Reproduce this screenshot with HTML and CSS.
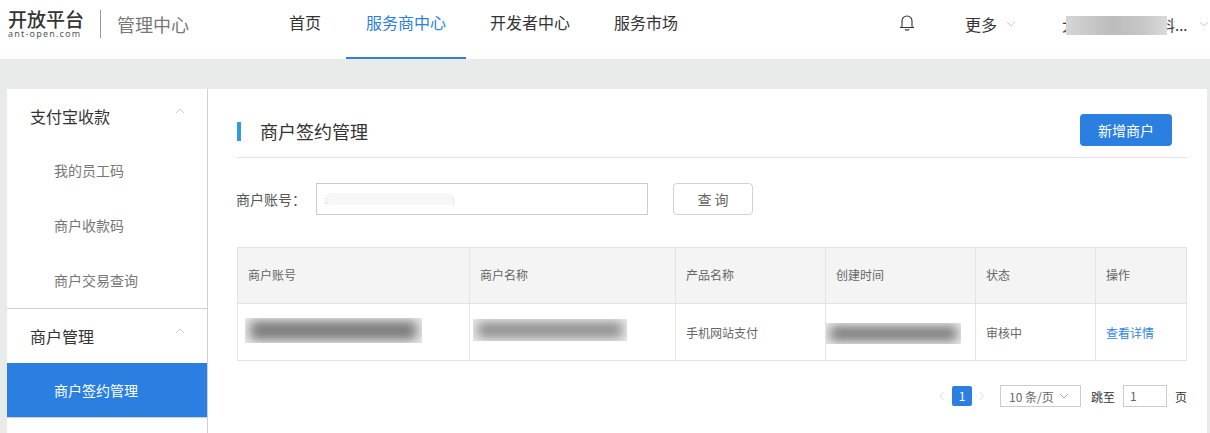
FILE: index.html
```html
<!DOCTYPE html>
<html lang="zh">
<head>
<meta charset="utf-8">
<title>商户签约管理</title>
<link rel="stylesheet" href="styles.css">
</head>
<body>
<header class="topbar">
  <div class="brand">
    <div class="logo">
      <div class="logo-cn">开放平台</div>
      <div class="logo-en">ant-open.com</div>
    </div>
    <div class="brand-sep"></div>
    <div class="brand-sub">管理中心</div>
  </div>
  <nav class="nav">
    <a class="nav-item">首页</a>
    <a class="nav-item active">服务商中心</a>
    <a class="nav-item">开发者中心</a>
    <a class="nav-item">服务市场</a>
  </nav>
  <div class="top-right">
    <svg class="bell" width="16" height="18" viewBox="0 0 16 18" fill="none" stroke="#333" stroke-width="1.1">
      <path d="M3 12.500V7a5 5 0 0 1 10 0v5.500"/>
      <path d="M1 13.500c1.200-.2 2-.5 2-1M15 13.500c-1.200-.2-2-.5-2-1M1 13.500h14"/>
      <path d="M6 15.200c.6 1.200 3.400 1.200 4 0"/>
    </svg>
    <div class="more">更多<svg class="chev" width="10" height="6" viewBox="0 0 10 6"><path d="M1 1l4 4 4-4" fill="none" stroke="#ccc" stroke-width="1"/></svg></div>
    <div class="user">
      <span class="user-name">大</span>
      <span class="user-blur"></span>
      <span class="user-name">料...</span>
      <svg class="chev" width="10" height="6" viewBox="0 0 10 6"><path d="M1 1l4 4 4-4" fill="none" stroke="#ccc" stroke-width="1"/></svg>
    </div>
  </div>
</header>
<div class="layout">
  <aside class="sidebar">
    <section class="group">
      <div class="group-title">支付宝收款<svg class="chev-up" width="10" height="6" viewBox="0 0 10 6"><path d="M1 5l4-4 4 4" fill="none" stroke="#ccc" stroke-width="1"/></svg></div>
      <a class="side-item">我的员工码</a>
      <a class="side-item">商户收款码</a>
      <a class="side-item">商户交易查询</a>
    </section>
    <section class="group second">
      <div class="group-title">商户管理<svg class="chev-up" width="10" height="6" viewBox="0 0 10 6"><path d="M1 5l4-4 4 4" fill="none" stroke="#ccc" stroke-width="1"/></svg></div>
      <a class="side-item current">商户签约管理</a>
    </section>
  </aside>
  <main class="content">
    <div class="page-head">
      <h1 class="page-title">商户签约管理</h1>
      <button class="btn-primary">新增商户</button>
    </div>
    <div class="search">
      <label class="search-label">商户账号：</label>
      <div class="search-input"><span class="faint">z</span><span class="input-blur"></span><span class="faint">)</span></div>
      <button class="btn-query">查 询</button>
    </div>
    <table class="table">
      <colgroup>
        <col class="c1"><col class="c2"><col class="c3"><col class="c3"><col class="c5"><col class="c6">
      </colgroup>
      <thead>
        <tr><th>商户账号</th><th>商户名称</th><th>产品名称</th><th>创建时间</th><th>状态</th><th>操作</th></tr>
      </thead>
      <tbody>
        <tr>
          <td class="masked"><span class="smear s1"><i></i></span></td>
          <td class="masked"><span class="smear s2"><i></i></span></td>
          <td>手机网站支付</td>
          <td class="masked"><span class="smear s3"><i></i></span></td>
          <td>审核中</td>
          <td><a class="link">查看详情</a></td>
        </tr>
      </tbody>
    </table>
    <div class="pager">
      <svg class="pg-arrow" width="7" height="10" viewBox="0 0 7 10"><path d="M5.500 1l-4 4 4 4" fill="none" stroke="#ddd" stroke-width="1"/></svg>
      <span class="pg-current">1</span>
      <svg class="pg-arrow" width="7" height="10" viewBox="0 0 7 10"><path d="M1.500 1l4 4-4 4" fill="none" stroke="#ddd" stroke-width="1"/></svg>
      <div class="pg-size">10 条/页<svg width="10" height="6" viewBox="0 0 10 6"><path d="M1 1l4 4 4-4" fill="none" stroke="#aaa" stroke-width="1"/></svg></div>
      <span class="pg-text jump">跳至</span>
      <div class="pg-input">1</div>
      <span class="pg-text">页</span>
    </div>
  </main>
</div>
</body>
</html>
```
FILE: styles.css
```css
* { box-sizing: border-box; }
html, body { height: 100%; }
body {
  margin: 0;
  height: 433px;
  overflow: hidden;
  background: #e9ebea;
  font-family: "Noto Sans CJK SC", "Liberation Sans", sans-serif;
  color: #333;
}
.topbar {
  height: 59px;
  background: #fff;
  display: flex;
  align-items: stretch;
  position: relative;
}
.brand {
  width: 289px;
  padding-left: 8px;
  display: flex;
  align-items: center;
  padding-bottom: 11px;
  flex: none;
}
.logo { width: 76px; }
.logo-cn {
  font-size: 19px;
  line-height: 20px;
  font-weight: 500;
  color: #333;
  white-space: nowrap;
}
.logo-en {
  font-family: "Noto Sans", sans-serif;
  font-size: 9px;
  line-height: 10px;
  letter-spacing: 1.200px;
  color: #555;
  white-space: nowrap;
}
.brand-sep {
  width: 1px;
  height: 28px;
  background: #999;
  margin-left: 16px;
}
.brand-sub {
  margin-left: 16px;
  font-size: 18px;
  color: #777;
  white-space: nowrap;
}
.nav { display: flex; width: 580px; flex: none; }
.nav-item {
  font-size: 16px;
  line-height: 45px;
  height: 59px;
  color: #333;
  padding: 0 19px 0 0;
  margin-right: 25px;
}
.nav-item:first-child { margin-right: 26px; }
.nav-item.active {
  color: #2b7fe0;
  border-bottom: 2px solid #2b7fe0;
  padding: 0 20px;
  margin: 0 24px 0 -20px;
}
.top-right {
  flex: 1;
  display: flex;
  align-items: center;
  padding-bottom: 11px;
  font-size: 15px;
  color: #333;
  white-space: nowrap;
}
.bell { margin: 0 0 2px 30px; flex: none; }
.more { margin-left: 50px; display: flex; align-items: center; font-size: 16px; }
.chev { margin-left: 9px; flex: none; }
.user { margin-left: 46px; display: flex; align-items: center; }
.user-name { font-size: 15px; }
.user .chev { margin-left: 11px; }
.user-blur {
  width: 101px;
  height: 19px;
  margin: 3px -7px 0 -11px;
  position: relative;
  background: linear-gradient(90deg, #d6d6d6, #bcbcbc 45%, #c6c6c6 75%, #dadada);
}
.layout {
  margin: 30px 3px 0 7px;
  display: flex;
  height: 344px;
}
.sidebar {
  width: 201px;
  flex: none;
  background: #fff;
  border-right: 1px solid #d0d0d0;
}
.group-title {
  height: 54px;
  padding: 0 22px 0 23px;
  display: flex;
  align-items: center;
  justify-content: space-between;
  font-size: 16px;
  color: #333;
}
.chev-up { margin-bottom: 11px; }
.side-item {
  display: block;
  height: 55px;
  line-height: 55px;
  padding-left: 47px;
  font-size: 14px;
  color: #777;
}
.group.second { border-top: 1px solid #d0d0d0; }
.group:first-child { height: 219px; }
.side-item.current {
  background: #2b7fe0;
  color: #fff;
  border-bottom: 1px solid #d0d0d0;
}
.content {
  flex: 1;
  background: #fff;
  padding: 0 20px 0 29px;
  min-width: 0;
}
.page-head {
  height: 69px;
  border-bottom: 1px solid #e3e3e3;
  display: flex;
  align-items: center;
  justify-content: space-between;
  padding-top: 17px;
}
.page-title {
  margin: 0;
  font-size: 18px;
  font-weight: 400;
  line-height: 19px;
  color: #333;
  border-left: 4px solid #3598e6;
  padding-left: 19px;
}
.btn-primary {
  width: 92px;
  height: 32px;
  margin: 0 15px 0 0;
  position: relative;
  top: -2px;
  padding: 0;
  border: 0;
  border-radius: 4px;
  background: #2b7fe0;
  color: #fff;
  font: inherit;
  font-size: 14px;
}
.search {
  display: flex;
  align-items: center;
  margin-top: 25px;
  height: 32px;
}
.search-label { width: 80px; margin-left: -1px; font-size: 14px; color: #555; white-space: nowrap; }
.search-input {
  width: 332px;
  height: 32px;
  border: 1px solid #ccc;
  display: flex;
  align-items: center;
  padding-left: 7px;
  font-size: 10px;
  color: #ddd;
}
.faint { flex: none; }
.input-blur {
  width: 126px;
  height: 12px;
  margin: 0 -1px 0 -2px;
  background: #f7f7f7;
  border-radius: 4px;
}
.btn-query {
  margin-left: 25px;
  width: 80px;
  height: 32px;
  padding: 0;
  border: 1px solid #d2d2d2;
  border-radius: 4px;
  background: #fff;
  font: inherit;
  font-size: 14px;
  color: #666;
}
.table {
  margin-top: 32px;
  width: 949px;
  table-layout: fixed;
  border-collapse: collapse;
  font-size: 12px;
  color: #666;
}
.c1 { width: 232px; }
.c2 { width: 206px; }
.c3 { width: 150px; }
.c5 { width: 120px; }
.c6 { width: 91px; }
.table th, .table td {
  border: 1px solid #e3e3e3;
  padding: 0 10px;
  text-align: left;
  font-weight: 400;
}
.table th { height: 56px; background: #f4f4f4; padding-bottom: 2px; }
.table td { height: 57px; padding-top: 1px; }
.table td.masked { padding: 0; }
.smear {
  display: block;
  overflow: hidden;
  position: relative;
  background: #ececec;
}
.smear i {
  display: block;
  height: 100%;
  margin: 0;
  background: #808080;
  filter: blur(6px);
  transform: scale(.94, .78);
}
.s1 { width: 177px; height: 25px; margin: 0 0 4px 7px; }
.s2 { width: 154px; height: 22px; margin: 0 0 4px 3px; }
.s2 i { background: #959595; }
.s3 { width: 135px; height: 21px; margin: 3px 0 0; }
.s3 i { background: #858585; }
.link { color: #2f86e0; }
.pager {
  display: flex;
  align-items: center;
  justify-content: flex-end;
  margin-top: 24px;
  height: 22px;
  font-size: 12px;
}
.pg-arrow { flex: none; }
.pg-current {
  width: 20px;
  height: 20px;
  margin: 0 6px 0 7px;
  background: #2b7fe0;
  color: #fff;
  border-radius: 2px;
  text-align: center;
  line-height: 20px;
}
.pg-size {
  width: 81px;
  height: 22px;
  margin-left: 15px;
  border: 1px solid #ccc;
  display: flex;
  align-items: center;
  justify-content: space-between;
  padding: 0 11px 0 8px;
  color: #666;
}
.pg-text { color: #333; }
.jump { margin-left: 10px; }
.pg-input {
  width: 44px;
  height: 22px;
  margin: 0 8px 0 8px;
  border: 1px solid #ccc;
  padding-left: 6px;
  line-height: 20px;
  color: #666;
}
```
